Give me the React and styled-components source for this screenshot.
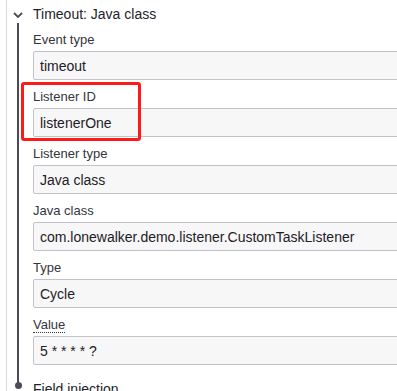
import React from 'react';
import styled, { createGlobalStyle } from 'styled-components';

const GlobalStyle = createGlobalStyle`
html, body {
  margin: 0;
  padding: 0;
  background: #ffffff;
  overflow: hidden;
}
body {
  font-family: "Liberation Sans", Arial, sans-serif;
  color: #22242a;
}
`;

const Panel = styled.div`
  width: 420px;
  height: 391px;
  margin-left: 6px;
  border-left: 1px solid #d6d6dc;
  overflow: hidden;
`;

const Entry = styled.div`
  display: grid;
  grid-template-columns: 26px 1fr;
`;

const Slot = styled.div`
  display: flex;
  flex-direction: column;
  align-items: flex-start;
`;

const Chevron = styled.svg`
  width: 10px;
  height: 6px;
  margin: 12px 0 0 6px;
`;

const Rail = styled.div`
  width: 2px;
  flex: 1;
  margin-left: 10px;
  background: #4b4c55;
`;

const Dot = styled.div`
  position: relative;
  width: 7px;
  height: 7px;
  margin: 3px 0 0 8px;
  border-radius: 50%;
  background: #4b4c55;

  &::before {
    content: '';
    position: absolute;
    left: 2px;
    top: -4px;
    width: 2px;
    height: 5px;
    background: #4b4c55;
  }
`;

const Title = styled.div`
  font-size: 14px;
  line-height: 20px;
  padding-top: ${p => p.$pad}px;
  height: ${p => p.$h}px;
  box-sizing: border-box;
  color: #22242a;
`;

const Fields = styled.div`
  display: flex;
  flex-direction: column;
  padding: 7px 0 7px 0;
`;

const Field = styled.div`
  position: relative;
  display: flex;
  flex-direction: column;
  margin-bottom: 7px;
`;

const Label = styled.label`
  font-size: 13px;
  line-height: 20px;
  margin-bottom: 1px;
  color: #33353c;
`;

const Hint = styled.span`
  border-bottom: 1px dotted #33353c;
`;

const Input = styled.div`
  box-sizing: border-box;
  height: 29px;
  display: flex;
  align-items: center;
  padding: 0 6px;
  font-size: 14px;
  color: #1e2026;
  background: #f7f7f8;
  border: 1px solid #c2c1cc;
  border-radius: 2px;
  white-space: nowrap;
`;

const Highlight = styled.div`
  position: absolute;
  left: -12px;
  top: -5px;
  width: 120px;
  height: 59px;
  box-sizing: border-box;
  border: 3px solid #ff1a1a;
  border-radius: 3px;
  pointer-events: none;
`;

const fields = [
  { label: 'Event type', value: 'timeout' },
  { label: 'Listener ID', value: 'listenerOne', highlight: true },
  { label: 'Listener type', value: 'Java class' },
  { label: 'Java class', value: 'com.lonewalker.demo.listener.CustomTaskListener' },
  { label: 'Type', value: 'Cycle' },
  { label: 'Value', value: '5 * * * * ?', hint: true },
];

export default function App() {
  return (
    <>
      <GlobalStyle />
      <Panel>
        <Entry>
          <Slot>
            <Chevron viewBox="0 0 10 6" fill="none">
              <path d="M1 1 L5 5 L9 1" stroke="#4b4c55" strokeWidth="1.8" />
            </Chevron>
          </Slot>
          <Title $h={23} $pad={4}>Timeout: Java class</Title>

          <Slot>
            <Rail />
          </Slot>
          <Fields>
            {fields.map(f => (
              <Field key={f.label}>
                <Label>{f.hint ? <Hint>{f.label}</Hint> : f.label}</Label>
                <Input>{f.value}</Input>
                {f.highlight && <Highlight />}
              </Field>
            ))}
          </Fields>

          <Slot>
            <Dot />
          </Slot>
          <Title $h={20} $pad={0}>Field injection</Title>
        </Entry>
      </Panel>
    </>
  );
}
